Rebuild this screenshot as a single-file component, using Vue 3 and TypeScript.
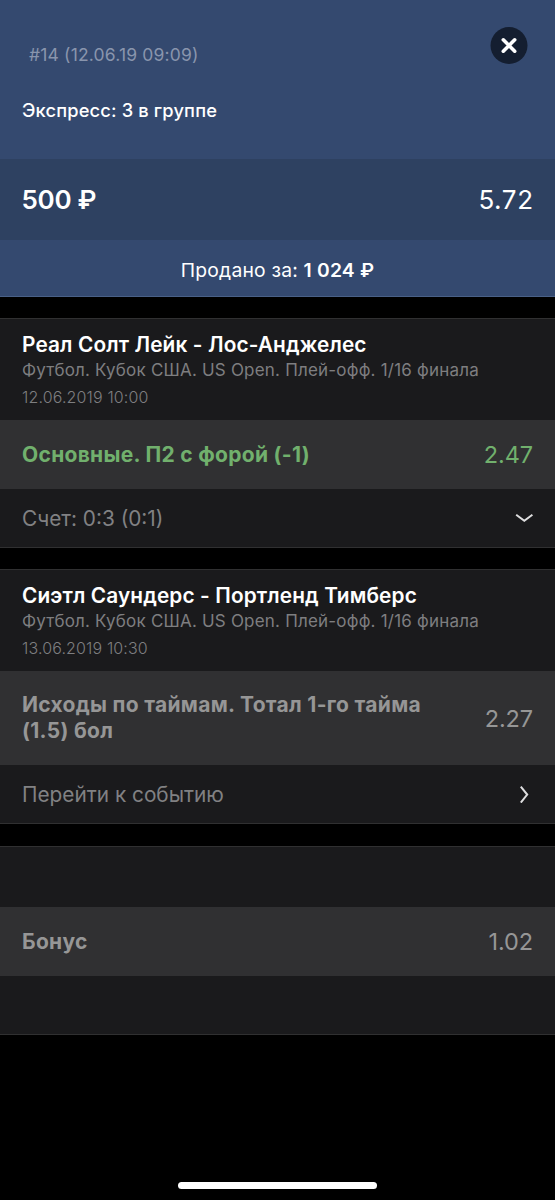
<script setup lang="ts">
interface BetEvent {
  title?: string
  league?: string
  date?: string
  outcome: string
  odds: string
  won?: boolean
  footer?: string
  chevron?: 'down' | 'right'
}

const events: BetEvent[] = [
  {
    title: 'Реал Солт Лейк - Лос-Анджелес',
    league: 'Футбол. Кубок США. US Open. Плей-офф. 1/16 финала',
    date: '12.06.2019 10:00',
    outcome: 'Основные. П2 с форой (-1)',
    odds: '2.47',
    won: true,
    footer: 'Счет: 0:3 (0:1)',
    chevron: 'down',
  },
  {
    title: 'Сиэтл Саундерс - Портленд Тимберс',
    league: 'Футбол. Кубок США. US Open. Плей-офф. 1/16 финала',
    date: '13.06.2019 10:30',
    outcome: 'Исходы по таймам. Тотал 1-го тайма (1.5) бол',
    odds: '2.27',
    footer: 'Перейти к событию',
    chevron: 'right',
  },
  { outcome: 'Бонус', odds: '1.02' },
]
</script>

<template>
  <main class="screen">
    <header class="summary">
      <div class="top">
        <div class="labels">
          <div class="number">#14 (12.06.19 09:09)</div>
          <div class="kind">Экспресс: 3 в группе</div>
        </div>
        <button class="close" aria-label="Закрыть">
          <svg width="38" height="38" viewBox="0 0 38 38">
            <circle cx="19" cy="18.5" r="18.5" fill="#141e30" />
            <path d="M13.3 12.8 24.7 24.2M24.7 12.8 13.3 24.2" stroke="#fff" stroke-width="3.6" stroke-linecap="round" />
          </svg>
        </button>
      </div>
      <div class="stake">
        <span class="amount">500 ₽</span>
        <span class="total">5.72</span>
      </div>
      <div class="sold"><span>Продано за: <b>1 024 ₽</b></span></div>
    </header>

    <section v-for="(e, i) in events" :key="i" class="card" :class="{ bonus: !e.title }">
      <div class="head">
        <template v-if="e.title">
          <div class="title">{{ e.title }}</div>
          <div class="league">{{ e.league }}</div>
          <div class="date">{{ e.date }}</div>
        </template>
      </div>
      <div class="pick" :class="{ won: e.won }">
        <span class="outcome">{{ e.outcome }}</span>
        <span class="odds">{{ e.odds }}</span>
      </div>
      <div class="foot">
        <span v-if="e.footer">{{ e.footer }}</span>
        <svg v-if="e.chevron === 'down'" width="18" height="18" viewBox="0 0 18 18">
          <path d="M1.2 5.7 9.3 11.8 17.4 5.7" />
        </svg>
        <svg v-if="e.chevron === 'right'" width="18" height="18" viewBox="0 0 18 18">
          <path d="M5.8 1.6 12.2 9.6 5.8 17.6" />
        </svg>
      </div>
    </section>

    <div class="home-bar"></div>
  </main>
</template>

<style>
body {
  background: #000;
}
</style>

<style scoped>
.screen {
  box-sizing: border-box;
  display: flex;
  flex-direction: column;
  width: 555px;
  height: 1200px;
  background: #000;
  color: #fff;
  font-family: Inter, Roboto, "Liberation Sans", sans-serif;
  overflow: hidden;
}
.summary {
  background: #34496f;
}
.top {
  box-sizing: border-box;
  display: flex;
  justify-content: space-between;
  height: 159px;
  padding: 27px 27px 0 22px;
}
.number {
  margin: 17px 0 0 7px;
  font-size: 17.5px;
  line-height: 22px;
  letter-spacing: 0.17px;
  color: #8995ad;
}
.kind {
  margin-top: 33px;
  font-size: 18.3px;
  line-height: 22px;
  font-weight: 500;
  letter-spacing: 0.15px;
}
.close {
  width: 38px;
  height: 38px;
  padding: 0;
  border: 0;
  background: none;
}
.close svg {
  display: block;
}
.stake {
  display: flex;
  align-items: center;
  justify-content: space-between;
  height: 81px;
  padding: 0 22px;
  background: #2e4161;
  font-size: 26px;
}
.amount {
  margin-left: -0.5px;
  font-weight: 600;
  letter-spacing: -0.3px;
}
.total {
  margin-right: -0.6px;
  letter-spacing: 0.6px;
}
.sold {
  box-sizing: border-box;
  display: flex;
  align-items: center;
  justify-content: center;
  height: 57px;
  padding-top: 3px;
  border-bottom: 1px solid #4a6187;
  font-size: 19.3px;
  letter-spacing: 0.2px;
}
.sold b {
  font-weight: 600;
}
.card {
  box-sizing: border-box;
  margin-top: 21px;
  border-top: 1px solid #303031;
  border-bottom: 1px solid #303031;
  background: #1a1a1c;
}
.head {
  box-sizing: border-box;
  height: 101px;
  padding: 13px 22px 0;
}
.title {
  font-size: 20.8px;
  line-height: 26px;
  font-weight: 600;
  letter-spacing: 0.13px;
}
.league {
  font-size: 17px;
  line-height: 25px;
  letter-spacing: 0.2px;
  color: #7e7e80;
}
.date {
  margin-top: 1px;
  font-size: 16px;
  line-height: 26px;
  font-weight: 300;
  letter-spacing: 0.14px;
  color: #7e7e80;
}
.pick {
  box-sizing: border-box;
  display: flex;
  align-items: center;
  justify-content: space-between;
  min-height: 69px;
  padding: 21px 22px;
  background: #303032;
  color: #969696;
}
.won {
  color: #71b06d;
}
.outcome {
  max-width: 420px;
  font-size: 21px;
  line-height: 26px;
  font-weight: 700;
  letter-spacing: 0.3px;
}
.odds {
  font-size: 23.5px;
  line-height: 25px;
  letter-spacing: -0.1px;
}
.foot {
  box-sizing: border-box;
  display: flex;
  align-items: center;
  justify-content: space-between;
  height: 58px;
  padding: 0 22px;
  font-size: 20.8px;
  color: #818183;
}
.foot svg {
  fill: none;
  stroke: #dededf;
  stroke-width: 2;
}
.bonus {
  margin-top: 22px;
}
.bonus .head {
  height: 60px;
}
.home-bar {
  width: 199px;
  height: 7px;
  margin: auto auto 11px;
  border-radius: 4px;
  background: #fff;
}
</style>
